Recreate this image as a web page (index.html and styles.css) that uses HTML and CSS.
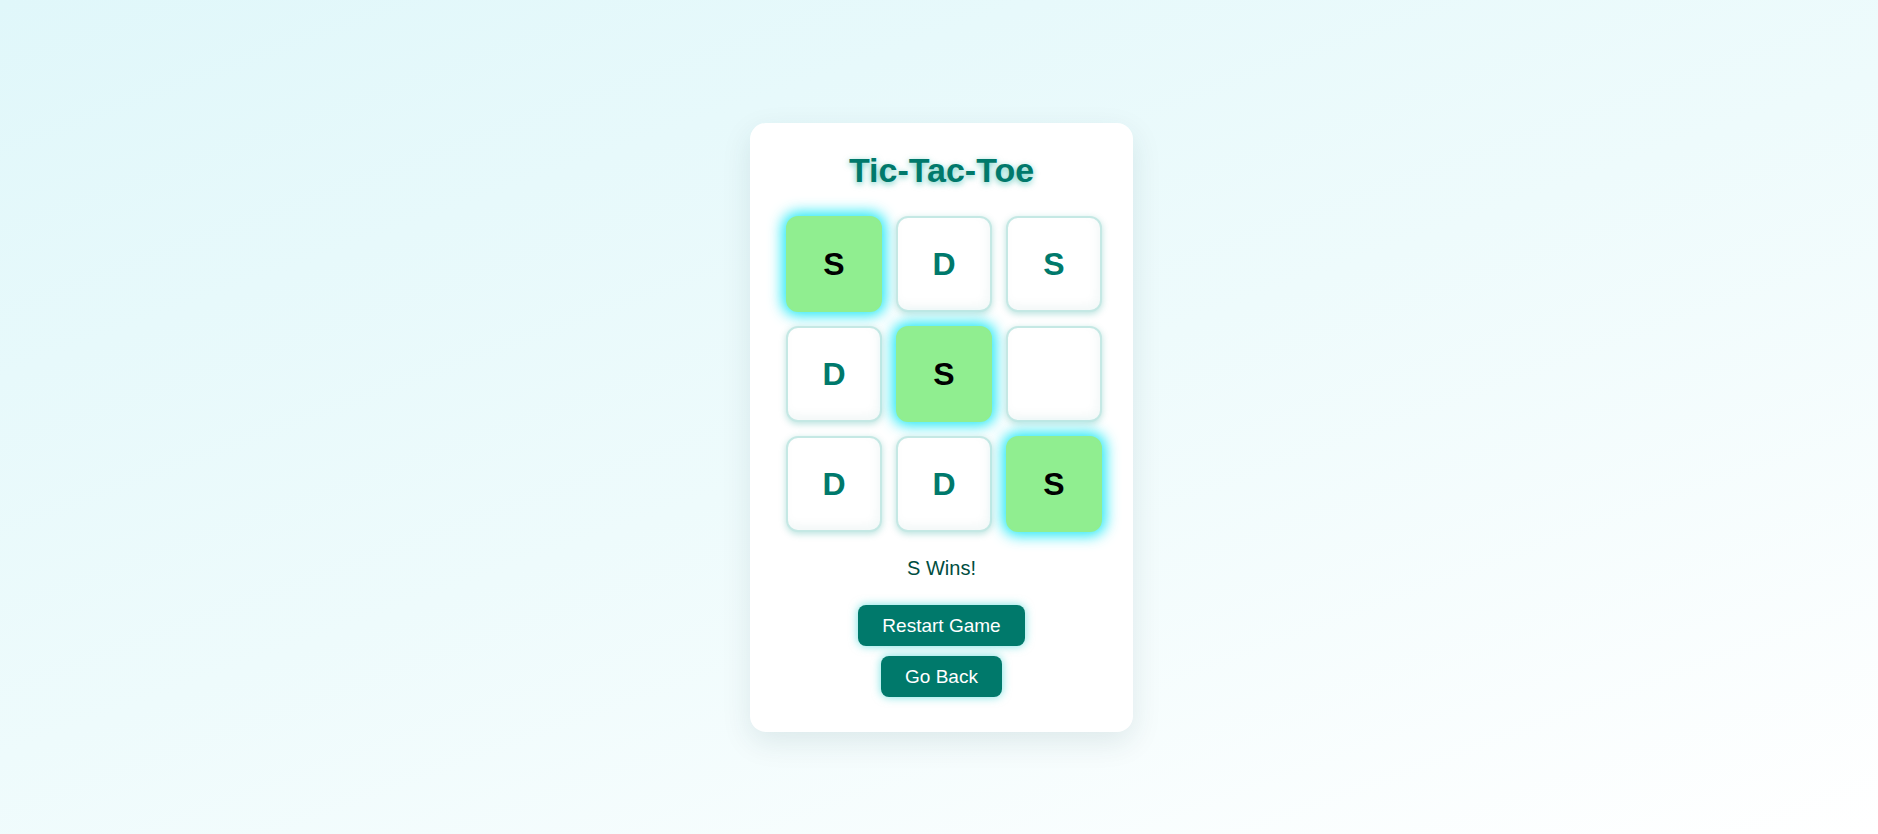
FILE: index.html
```html
<!DOCTYPE html>
<html lang="en">
<head>
<meta charset="utf-8">
<title>Tic-Tac-Toe</title>
<link rel="stylesheet" href="styles.css">
</head>
<body>
<div class="page">
  <div class="card">
    <h1 class="title">Tic-Tac-Toe</h1>
    <div class="board">
      <div class="cell win">S</div>
      <div class="cell">D</div>
      <div class="cell">S</div>
      <div class="cell">D</div>
      <div class="cell win">S</div>
      <div class="cell"></div>
      <div class="cell">D</div>
      <div class="cell">D</div>
      <div class="cell win">S</div>
    </div>
    <p class="status">S Wins!</p>
    <button class="btn">Restart Game</button>
    <button class="btn">Go Back</button>
  </div>
</div>
</body>
</html>
```

FILE: styles.css
```css
html, body {
  margin: 0;
  padding: 0;
}

body {
  font-family: "Liberation Sans", Arial, sans-serif;
  background: linear-gradient(160deg, #e0f7fa 0%, #eefbfc 50%, #ffffff 100%);
  min-height: 100vh;
}

.page {
  min-height: 100vh;
  box-sizing: border-box;
  padding: 21px 0 0 5px;
  display: flex;
  align-items: center;
  justify-content: center;
}

.card {
  width: 383px;
  box-sizing: border-box;
  padding: 28px 0 30px;
  background: #ffffff;
  border-radius: 16px;
  box-shadow: 0 10px 30px rgba(0, 60, 70, 0.1);
  text-align: center;
  display: flex;
  flex-direction: column;
  align-items: center;
}

.title {
  margin: 0 0 26px;
  font-size: 34px;
  font-weight: bold;
  line-height: 39px;
  color: #00796b;
  text-shadow: 0 2px 6px rgba(0, 170, 150, 0.6);
}

.board {
  display: grid;
  grid-template-columns: repeat(3, 96px);
  grid-auto-rows: 96px;
  gap: 14px;
  justify-content: center;
  padding-left: 5px;
}

.cell {
  box-sizing: border-box;
  display: flex;
  align-items: center;
  justify-content: center;
  border: 2px solid #c5e8e4;
  border-radius: 12px;
  background: #ffffff;
  box-shadow: 0 2px 7px rgba(0, 150, 136, 0.28), inset -3px -5px 10px rgba(0, 120, 110, 0.05);
  font-size: 32px;
  font-weight: bold;
  color: #00796b;
}

.cell.win {
  background: #90ee90;
  border-color: #90ee90;
  color: #000000;
  box-shadow: 0 0 14px 4px rgba(0, 229, 245, 0.85);
}

.status {
  margin: 25px 0 20px;
  font-size: 20px;
  line-height: 23px;
  color: #004d40;
}

.btn {
  display: block;
  margin: 5px auto;
  padding: 10px 24px;
  border: none;
  border-radius: 8px;
  background: #00796b;
  color: #ffffff;
  font-family: "Liberation Sans", Arial, sans-serif;
  font-size: 19px;
  line-height: 21px;
  box-shadow: 0 0 10px rgba(0, 200, 200, 0.55);
  cursor: pointer;
}
```
